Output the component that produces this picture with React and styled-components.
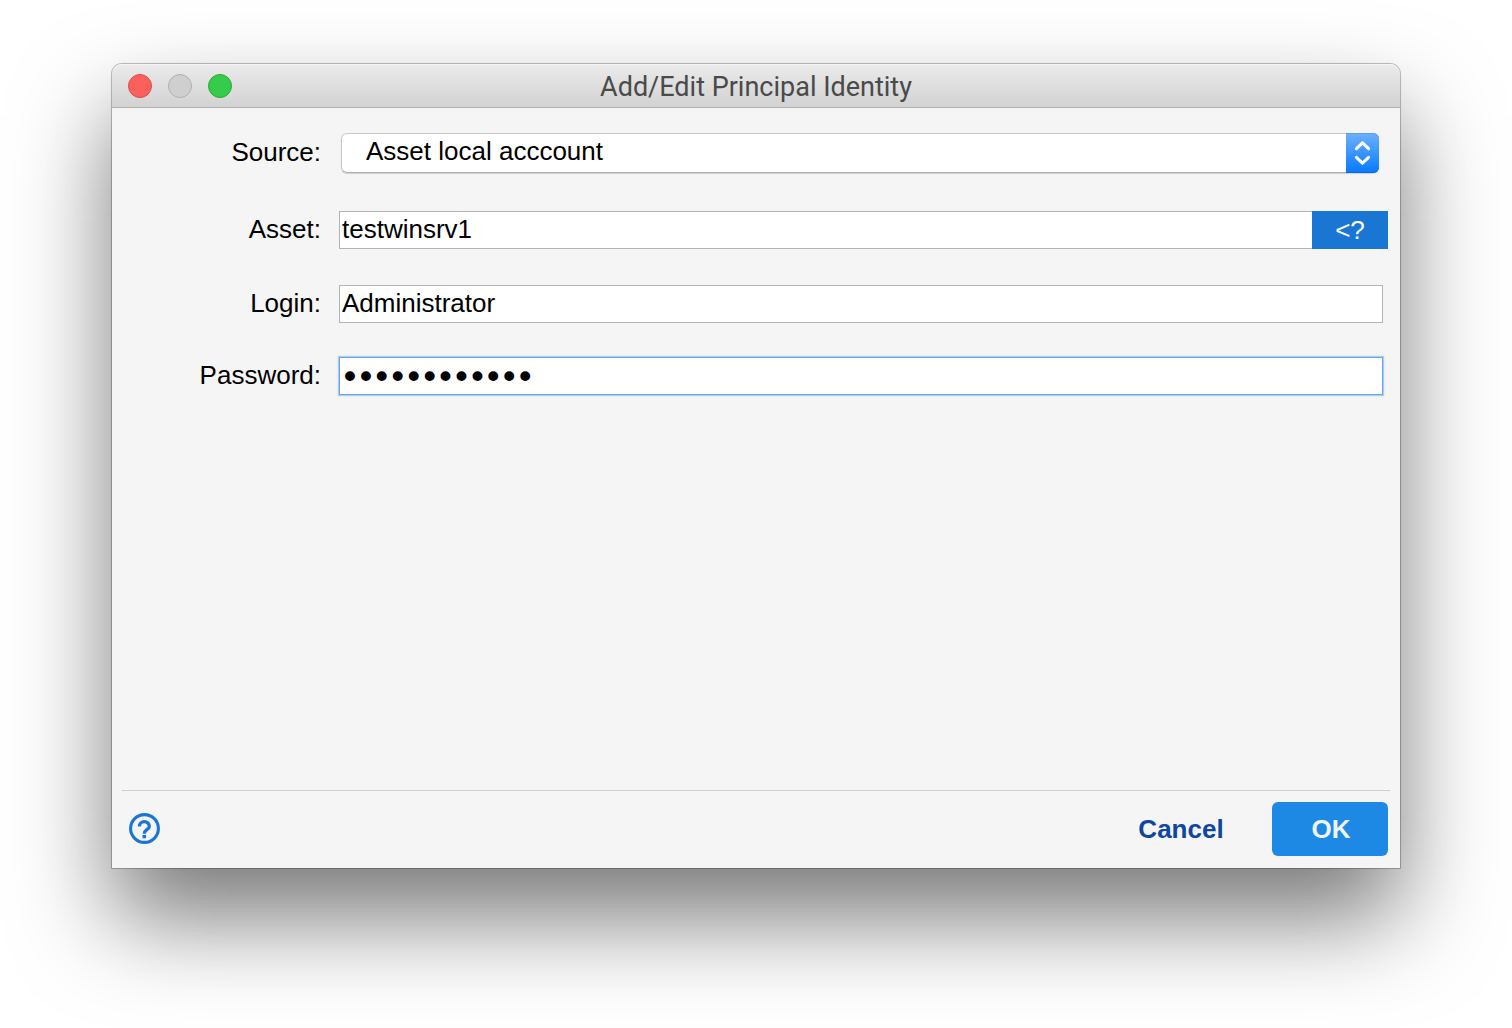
import React, { useState } from 'react'
import styled, { createGlobalStyle } from 'styled-components'

const GlobalStyle = createGlobalStyle`
  * {
    box-sizing: border-box;
  }

  body {
    margin: 0;
    background: #ffffff;
    color: #000000;
    font-family: 'Liberation Sans', Arial, sans-serif;
    font-size: 26px;
  }

  button, input, select {
    margin: 0;
    font: inherit;
  }
`

const Desktop = styled.div`
  display: flex;
  min-height: 100vh;
  padding: 64px 112px 160px;
`

const Dialog = styled.section`
  display: flex;
  flex: 1;
  flex-direction: column;
  min-width: 0;
  background: #f5f5f5;
  border-radius: 10px 10px 0 0;
  box-shadow: 0 0 0 1px rgba(0, 0, 0, 0.2), 0 0 2px rgba(0, 0, 0, 0.2), 0 50px 96px rgba(0, 0, 0, 0.53);
`

const TitleBar = styled.header`
  display: grid;
  grid-template-columns: 1fr auto 1fr;
  align-items: center;
  height: 44px;
  padding: 0 16px;
  border-bottom: 1px solid #b1b1b1;
  border-radius: 10px 10px 0 0;
  background: linear-gradient(#ebebeb, #d2d2d2);
  box-shadow: inset 0 1px 0 #f5f5f5;
`

const WindowButtons = styled.div`
  display: flex;
  gap: 16px;
`

const WindowButton = styled.button`
  width: 24px;
  height: 24px;
  padding: 0;
  border: 1px solid ${({ $edge }) => $edge};
  border-radius: 50%;
  background: ${({ $fill }) => $fill};
`

const Title = styled.h1`
  margin: 0;
  padding-top: 2px;
  color: #4a4a4a;
  font-family: Roboto, sans-serif;
  font-size: 27px;
  font-weight: 400;
  line-height: 32px;
`

const Form = styled.form`
  display: flex;
  flex: 1;
  flex-direction: column;
`

const Fields = styled.div`
  flex: 1;
  padding: 25px 12px 24px 0;
`

const Row = styled.div`
  display: grid;
  grid-template-columns: 209px 1fr;
  column-gap: 18px;
  align-items: center;
  margin-bottom: ${({ $gap }) => $gap || 0}px;
`

const Label = styled.label`
  padding-bottom: 2px;
  text-align: right;
  line-height: 36px;
`

const Field = styled.div`
  display: flex;
  min-width: 0;
  padding: ${({ $inset }) => $inset || '0 5px 0 0'};
`

const TextInput = styled.input`
  flex: 1;
  min-width: 0;
  height: 38px;
  padding: 0 2px 2px;
  border: 1px solid #b4b4b4;
  border-right-width: ${({ $joined }) => ($joined ? 0 : 1)}px;
  border-radius: 0;
  outline: none;
  background: #ffffff;
  color: #000000;
`

const PasswordInput = styled(TextInput)`
  padding: 0 2px;
  border-color: #6ea5e6;
  box-shadow: 0 0 0 1px #a9cdf7, 0 0 2px 1px #cfe2f8;
  font-family: 'DejaVu Sans', sans-serif;
  font-size: 27px;
  -webkit-text-stroke: 2px #000000;
`

const LookupButton = styled.button`
  width: 76px;
  height: 38px;
  padding: 0;
  border: 0;
  background: #1976d2;
  color: #ffffff;
`

const SelectBox = styled.div`
  display: flex;
  flex: 1;
  position: relative;
  height: 40px;
  border-radius: 6px;
  box-shadow: 0 1px 1px rgba(0, 0, 0, 0.15);
`

const Select = styled.select`
  flex: 1;
  min-width: 0;
  padding: 0 40px 4px 24px;
  border: 1px solid #c6c6c6;
  border-bottom-color: #b0b0b0;
  border-radius: 6px;
  outline: none;
  appearance: none;
  background: #ffffff;
  color: #000000;
`

const Stepper = styled.span`
  position: absolute;
  top: 0;
  right: 0;
  bottom: 0;
  width: 33px;
  border-radius: 0 6px 6px 0;
  background: linear-gradient(#6cb0fb, #067aff);
  box-shadow: inset 0 -1px 0 #0a67f0, inset 0 1px 0 #5a9fee;
  pointer-events: none;

  svg {
    display: block;
  }
`

const Footer = styled.footer`
  display: flex;
  align-items: center;
  margin: 0 10px;
  padding: 11px 2px 12px 7px;
  border-top: 1px solid #d0d0d0;
`

const HelpButton = styled.button`
  display: flex;
  margin-right: auto;
  padding: 0;
  border: 0;
  background: none;
  color: #1976d2;
`

const ActionButton = styled.button`
  width: 116px;
  height: 54px;
  margin-left: 34px;
  padding: 0 0 0 2px;
  border: 0;
  border-radius: 6px;
  background: ${({ $primary }) => ($primary ? '#1e88e5' : 'transparent')};
  color: ${({ $primary }) => ($primary ? '#f0f4f8' : '#0d47a1')};
  font-weight: 700;
`

function StepperIcon() {
  return (
    <svg width="33" height="40" viewBox="0 0 33 40" fill="none" stroke="#ffffff" strokeWidth="3" strokeLinecap="round">
      <path d="M10.4 15.6 L16.5 9.8 L22.6 15.6" />
      <path d="M10.4 24.4 L16.5 30.2 L22.6 24.4" />
    </svg>
  )
}

function HelpIcon() {
  return (
    <svg width="31" height="32" viewBox="0 0 31 32" fill="none" stroke="currentColor">
      <circle cx="15.5" cy="15.5" r="13.9" strokeWidth="3.1" />
      <path d="M10.4 13.4 A4.95 4.8 0 0 1 20.3 13.4 C20.3 16.4 15.3 16.6 15.3 20.8" strokeWidth="3.3" />
      <path d="M15.3 22 V25.3" strokeWidth="3.6" />
    </svg>
  )
}

export default function App() {
  const [asset, setAsset] = useState('testwinsrv1')
  const [login, setLogin] = useState('Administrator')
  const [password, setPassword] = useState('Password1234')

  return (
    <Desktop>
      <GlobalStyle />
      <Dialog role="dialog" aria-labelledby="title">
        <TitleBar>
          <WindowButtons>
            <WindowButton aria-label="Close" $fill="#fc605c" $edge="#e0484a" />
            <WindowButton aria-label="Minimize" disabled $fill="#cfcfcf" $edge="#b0b0b0" />
            <WindowButton aria-label="Zoom" $fill="#35cb4b" $edge="#27ac35" />
          </WindowButtons>
          <Title id="title">Add/Edit Principal Identity</Title>
        </TitleBar>

        <Form onSubmit={e => e.preventDefault()}>
          <Fields>
            <Row $gap={38}>
              <Label htmlFor="source">Source:</Label>
              <Field $inset="0 9px 0 2px">
                <SelectBox>
                  <Select id="source" defaultValue="local">
                    <option value="local">Asset local acccount</option>
                  </Select>
                  <Stepper>
                    <StepperIcon />
                  </Stepper>
                </SelectBox>
              </Field>
            </Row>
            <Row $gap={36}>
              <Label htmlFor="asset">Asset:</Label>
              <Field $inset="0">
                <TextInput id="asset" $joined value={asset} onChange={e => setAsset(e.target.value)} />
                <LookupButton type="button">{'<?'}</LookupButton>
              </Field>
            </Row>
            <Row $gap={34}>
              <Label htmlFor="login">Login:</Label>
              <Field>
                <TextInput id="login" value={login} onChange={e => setLogin(e.target.value)} />
              </Field>
            </Row>
            <Row>
              <Label htmlFor="password">Password:</Label>
              <Field>
                <PasswordInput
                  id="password"
                  type="password"
                  value={password}
                  onChange={e => setPassword(e.target.value)}
                />
              </Field>
            </Row>
          </Fields>

          <Footer>
            <HelpButton type="button" aria-label="Help">
              <HelpIcon />
            </HelpButton>
            <ActionButton type="button">Cancel</ActionButton>
            <ActionButton type="submit" $primary>
              OK
            </ActionButton>
          </Footer>
        </Form>
      </Dialog>
    </Desktop>
  )
}
